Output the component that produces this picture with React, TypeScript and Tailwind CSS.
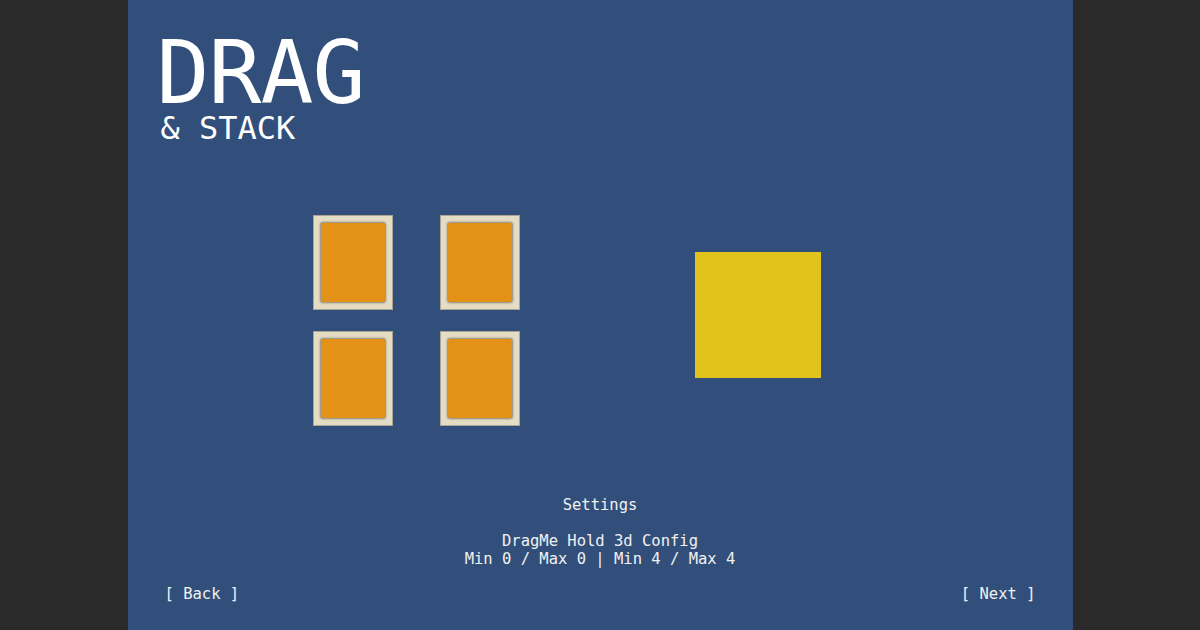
import React from 'react';

const mono = { fontFamily: '"DejaVu Sans Mono", "Liberation Mono", monospace' };

function Card() {
  return (
    <div className="w-[80px] h-[95px] bg-[#e4dcc4] border border-[#a9a593] p-[7px]">
      <div className="w-full h-full bg-[#e39117] rounded-[2px] shadow-[0_0_2px_1px_rgba(60,60,60,0.55)]" />
    </div>
  );
}

export default function App() {
  return (
    <div className="w-full h-[630px] bg-[#2a2a2a] flex justify-center" style={mono}>
      <main className="w-[945px] h-full bg-[#314f7a] text-white flex flex-col">
        <header className="pl-[29px] pt-[37px]">
          <h1 className="text-[88px] leading-[72px] tracking-[-1px]">DRAG</h1>
          <p className="text-[32px] leading-[32px] pl-[4px] mt-[3px]">&amp; STACK</p>
        </header>

        <section className="flex items-center mt-[71px] pl-[185px]">
          <div className="grid grid-cols-2 gap-x-[47px] gap-y-[21px]">
            <Card />
            <Card />
            <Card />
            <Card />
          </div>
          <div className="w-[126px] h-[126px] bg-[#e2c31a] ml-[175px] mt-[-12px]" />
        </section>

        <section className="flex flex-col items-center mt-[70px] text-[15.5px] leading-[18px] text-[#f1f1f1]">
          <p>Settings</p>
          <p className="mt-[18px]">DragMe Hold 3d Config</p>
          <p>Min 0 / Max 0 | Min 4 / Max 4</p>
        </section>

        <footer className="flex justify-between px-[37px] mt-[17px] text-[15.5px] leading-[18px] text-[#f1f1f1]">
          <button>[ Back ]</button>
          <button>[ Next ]</button>
        </footer>
      </main>
    </div>
  );
}
